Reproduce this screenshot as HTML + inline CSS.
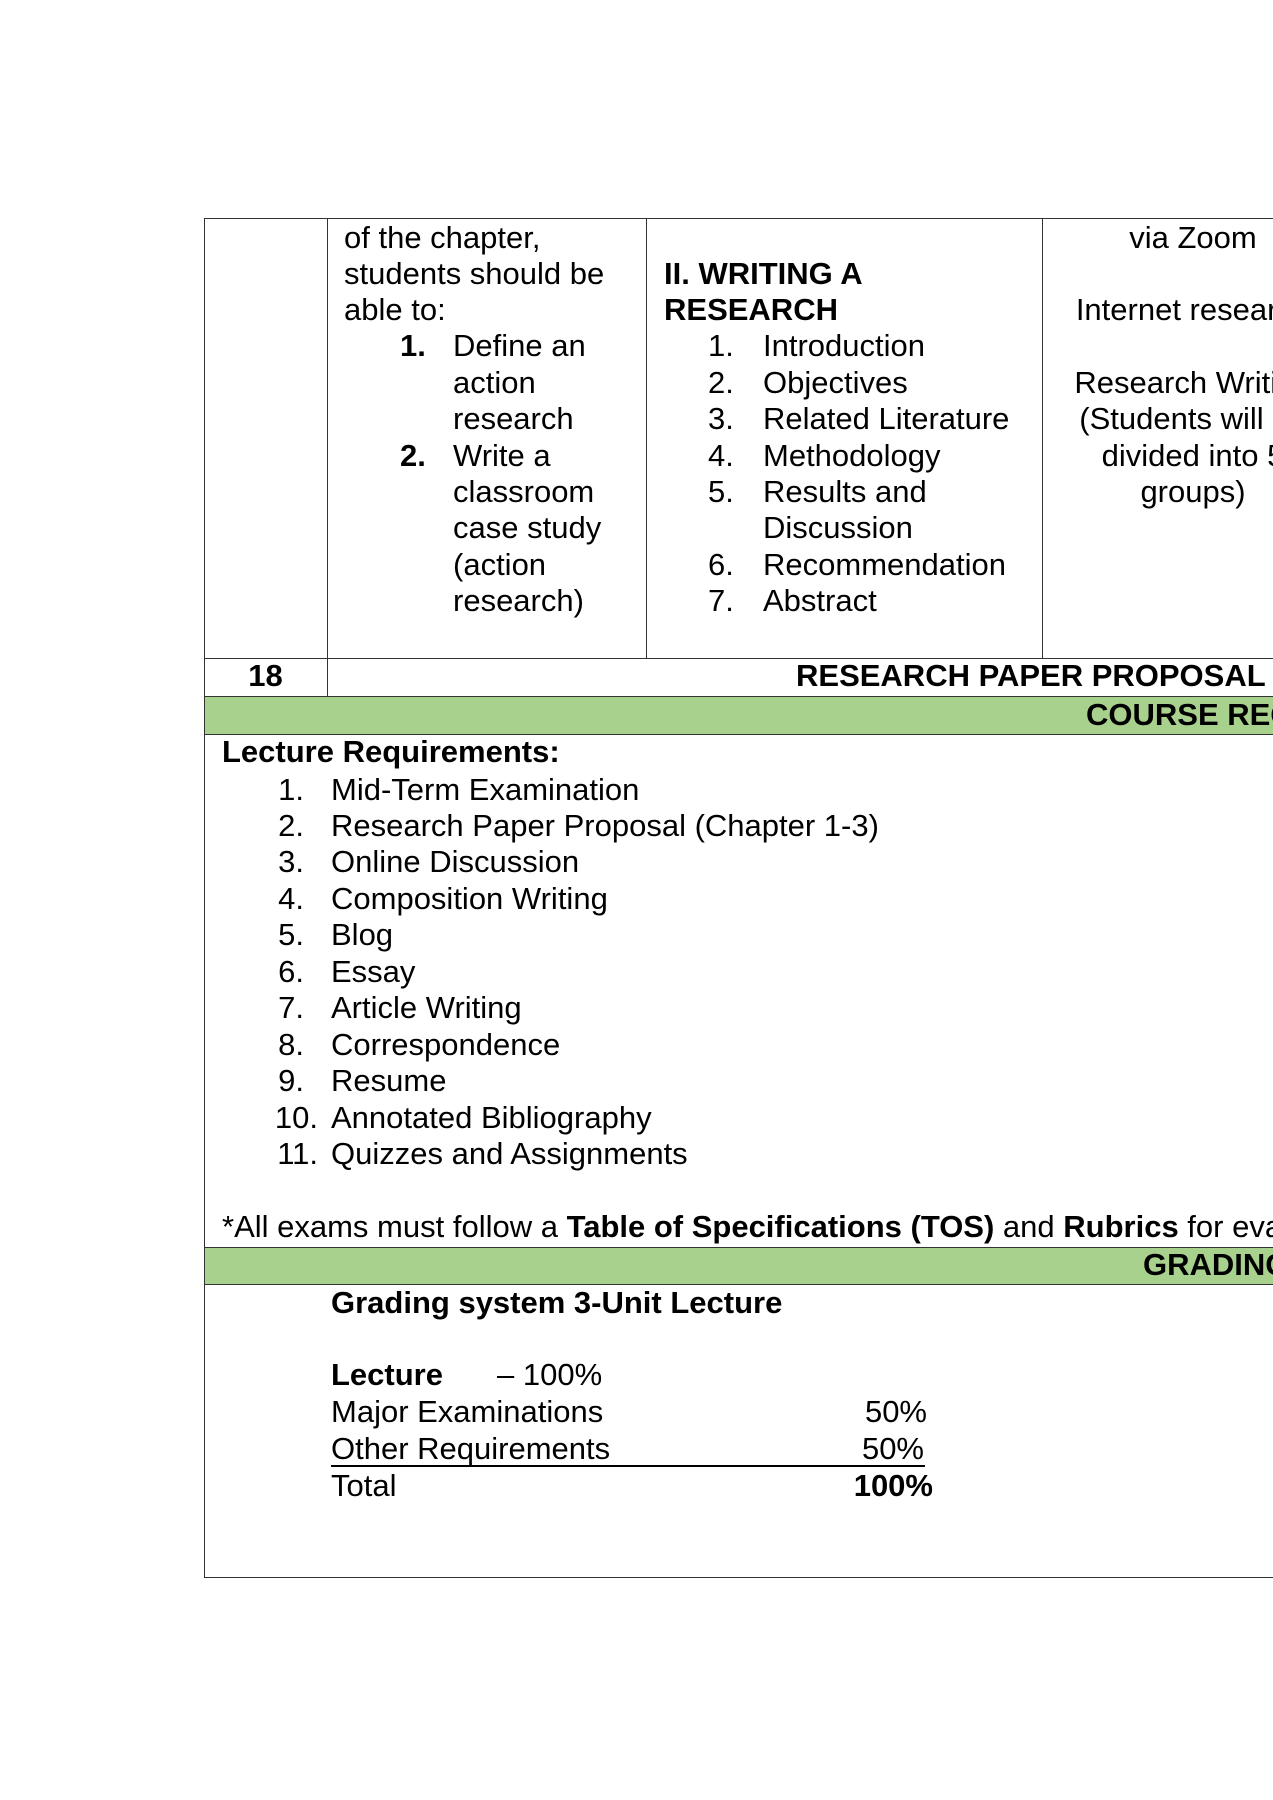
<!DOCTYPE html>
<html><head><meta charset="utf-8"><style>
html,body{margin:0;padding:0;background:#fff;}
body{width:1273px;height:1800px;position:relative;overflow:hidden;font-family:"Liberation Sans",Arial,sans-serif;font-size:31px;color:#000;}
#w{position:absolute;left:0;top:0;width:1273px;height:1800px;overflow:hidden;}
.t{position:absolute;line-height:36px;white-space:nowrap;}
.b{font-weight:bold;}
.h{position:absolute;height:0;border-top:1.5px solid #333;}
.v{position:absolute;width:0;border-left:1.5px solid #333;}
.g{position:absolute;background:#a9d18e;}
.c{text-align:center;}
.r{text-align:right;}
.clip{position:absolute;overflow:hidden;}
</style></head><body><div id="w">
<div class="g" style="left:205px;top:697px;width:1068px;height:37px"></div>
<div class="g" style="left:205px;top:1247px;width:1068px;height:37px"></div>
<div class="h" style="left:204px;top:218px;width:1069px"></div>
<div class="h" style="left:204px;top:658px;width:1069px"></div>
<div class="h" style="left:204px;top:696px;width:1069px"></div>
<div class="h" style="left:204px;top:734px;width:1069px"></div>
<div class="h" style="left:204px;top:1247px;width:1069px"></div>
<div class="h" style="left:204px;top:1284px;width:1069px"></div>
<div class="h" style="left:204px;top:1577px;width:1069px"></div>
<div class="v" style="left:204px;top:218px;height:1360px"></div>
<div class="v" style="left:327px;top:218px;height:478px"></div>
<div class="v" style="left:646px;top:218px;height:440px"></div>
<div class="v" style="left:1042px;top:218px;height:440px"></div>

<div class="t" style="left:344px;top:220px">of the chapter,</div>
<div class="t" style="left:344px;top:256px">students should be</div>
<div class="t" style="left:344px;top:292px">able to:</div>
<div class="t b" style="left:400px;top:328px">1.</div>
<div class="t" style="left:453px;top:328px">Define an</div>
<div class="t" style="left:453px;top:365px">action</div>
<div class="t" style="left:453px;top:401px">research</div>
<div class="t b" style="left:400px;top:438px">2.</div>
<div class="t" style="left:453px;top:438px">Write a</div>
<div class="t" style="left:453px;top:474px">classroom</div>
<div class="t" style="left:453px;top:510px">case study</div>
<div class="t" style="left:453px;top:547px">(action</div>
<div class="t" style="left:453px;top:583px">research)</div>

<div class="t b" style="left:664px;top:256px">II. WRITING A</div>
<div class="t b" style="left:664px;top:292px">RESEARCH</div>
<div class="t" style="left:708px;top:328px">1.</div><div class="t" style="left:763px;top:328px">Introduction</div>
<div class="t" style="left:708px;top:365px">2.</div><div class="t" style="left:763px;top:365px">Objectives</div>
<div class="t" style="left:708px;top:401px">3.</div><div class="t" style="left:763px;top:401px">Related Literature</div>
<div class="t" style="left:708px;top:438px">4.</div><div class="t" style="left:763px;top:438px">Methodology</div>
<div class="t" style="left:708px;top:474px">5.</div><div class="t" style="left:763px;top:474px">Results and</div>
<div class="t" style="left:763px;top:510px">Discussion</div>
<div class="t" style="left:708px;top:547px">6.</div><div class="t" style="left:763px;top:547px">Recommendation</div>
<div class="t" style="left:708px;top:583px">7.</div><div class="t" style="left:763px;top:583px">Abstract</div>

<div class="clip" style="left:1043px;top:219px;width:230px;height:438px">
<div class="t c" style="left:0;width:300px;top:1px">via Zoom</div>
<div class="t c" style="left:0;width:300px;top:73px">Internet research</div>
<div class="t c" style="left:0;width:300px;top:146px">Research Writing</div>
<div class="t c" style="left:0;width:300px;top:182px">(Students will be</div>
<div class="t c" style="left:0;width:300px;top:219px">divided into 5</div>
<div class="t c" style="left:0;width:300px;top:255px">groups)</div>
</div>

<div class="t b c" style="left:204px;width:123px;top:658px">18</div>
<div class="clip" style="left:700px;top:658px;width:573px;height:80px">
<div class="t b" style="left:96px;top:0">RESEARCH PAPER PROPOSAL</div>
<div class="t b" style="left:386px;top:39px">COURSE REQUIREMENTS</div>
</div>

<div class="t b" style="left:222px;top:734px">Lecture Requirements:</div>
<div class="t r" style="left:262px;width:42px;top:772px">1.</div><div class="t" style="left:331px;top:772px">Mid-Term Examination</div>
<div class="t r" style="left:262px;width:42px;top:808px">2.</div><div class="t" style="left:331px;top:808px">Research Paper Proposal (Chapter 1-3)</div>
<div class="t r" style="left:262px;width:42px;top:844px">3.</div><div class="t" style="left:331px;top:844px">Online Discussion</div>
<div class="t r" style="left:262px;width:42px;top:881px">4.</div><div class="t" style="left:331px;top:881px">Composition Writing</div>
<div class="t r" style="left:262px;width:42px;top:917px">5.</div><div class="t" style="left:331px;top:917px">Blog</div>
<div class="t r" style="left:262px;width:42px;top:954px">6.</div><div class="t" style="left:331px;top:954px">Essay</div>
<div class="t r" style="left:262px;width:42px;top:990px">7.</div><div class="t" style="left:331px;top:990px">Article Writing</div>
<div class="t r" style="left:262px;width:42px;top:1027px">8.</div><div class="t" style="left:331px;top:1027px">Correspondence</div>
<div class="t r" style="left:262px;width:42px;top:1063px">9.</div><div class="t" style="left:331px;top:1063px">Resume</div>
<div class="t r" style="left:262px;width:56px;top:1100px">10.</div><div class="t" style="left:331px;top:1100px">Annotated Bibliography</div>
<div class="t r" style="left:262px;width:56px;top:1136px">11.</div><div class="t" style="left:331px;top:1136px">Quizzes and Assignments</div>
<div class="clip" style="left:220px;top:1205px;width:1053px;height:42px">
<div class="t" style="left:2px;top:4px">*All exams must follow a <b>Table of Specifications (TOS)</b> and <b>Rubrics</b> for evaluation.</div>
</div>
<div class="clip" style="left:1140px;top:1247px;width:133px;height:37px">
<div class="t b" style="left:3px;top:0">GRADING SYSTEM</div>
</div>

<div class="t b" style="left:331px;top:1285px">Grading system 3-Unit Lecture</div>
<div class="t b" style="left:331px;top:1357px">Lecture</div><div class="t" style="left:497px;top:1357px">– 100%</div>
<div class="t" style="left:331px;top:1394px">Major Examinations</div><div class="t r" style="left:800px;width:127px;top:1394px">50%</div>
<div class="t" style="left:331px;top:1431px">Other Requirements</div><div class="t r" style="left:800px;width:124px;top:1431px">50%</div>
<div class="h" style="left:331px;top:1465px;width:594px;border-top:2px solid #000"></div>
<div class="t" style="left:331px;top:1468px">Total</div><div class="t r b" style="left:800px;width:133px;top:1468px">100%</div>
</div></body></html>
